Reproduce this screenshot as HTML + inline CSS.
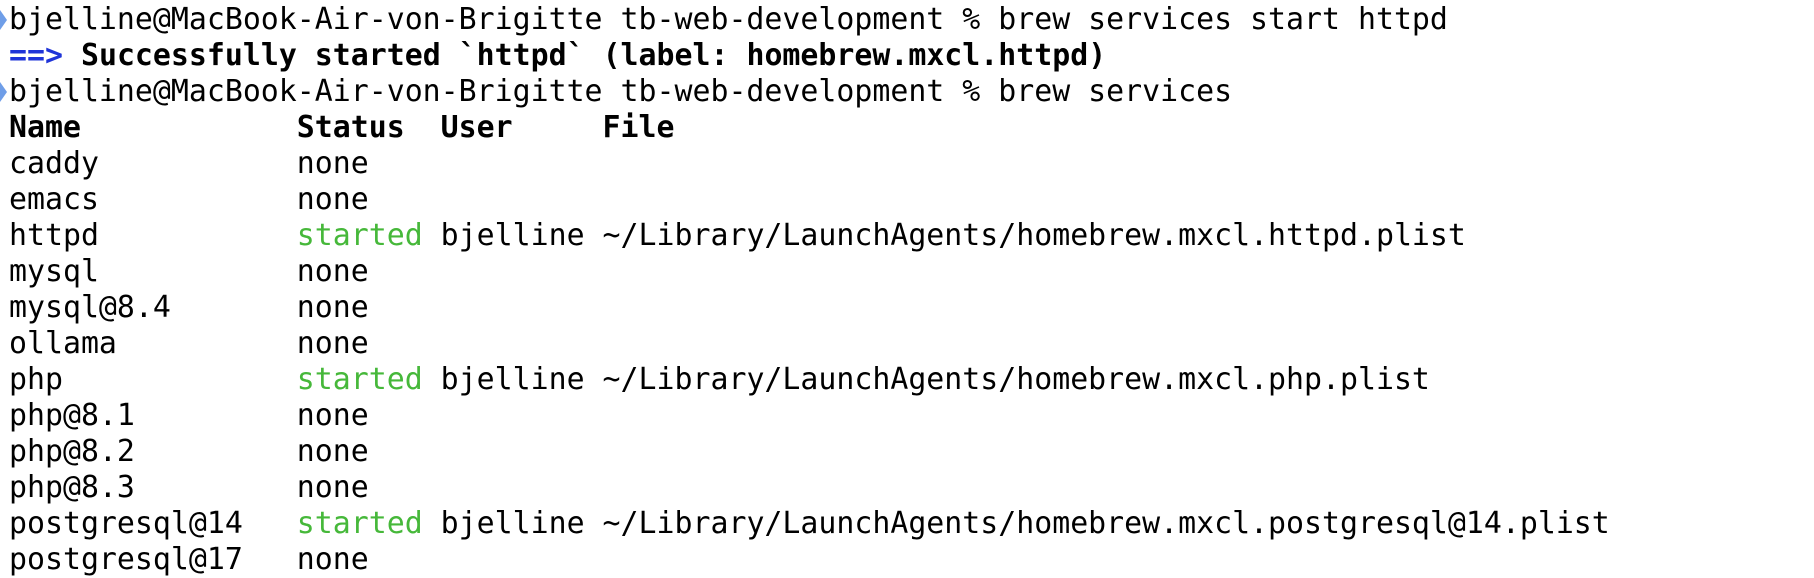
<!DOCTYPE html>
<html><head><meta charset="utf-8"><style>
html,body{margin:0;padding:0;background:#fff;width:1814px;height:554px;overflow:hidden}
pre{margin:0;position:absolute;left:9px;top:2px;font-family:"DejaVu Sans Mono","Liberation Mono",monospace;font-size:29.88px;line-height:36px;color:#000;letter-spacing:0}
b{font-weight:bold}
.bl{color:#1f34d8;font-weight:bold}
.g{color:#46b83a}
.m{position:absolute;left:0;width:7px;height:20px;background:#6f9ee8;clip-path:polygon(0 0,100% 50%,0 100%)}
</style></head><body>
<div class="m" style="top:10px"></div>
<div class="m" style="top:82px"></div>
<pre>bjelline@MacBook-Air-von-Brigitte tb-web-development % brew services start httpd
<span class="bl">==&gt;</span> <b>Successfully started `httpd` (label: homebrew.mxcl.httpd)</b>
bjelline@MacBook-Air-von-Brigitte tb-web-development % brew services
<b>Name            Status  User     File</b>
caddy           none
emacs           none
httpd           <span class="g">started</span> bjelline ~/Library/LaunchAgents/homebrew.mxcl.httpd.plist
mysql           none
mysql@8.4       none
ollama          none
php             <span class="g">started</span> bjelline ~/Library/LaunchAgents/homebrew.mxcl.php.plist
php@8.1         none
php@8.2         none
php@8.3         none
postgresql@14   <span class="g">started</span> bjelline ~/Library/LaunchAgents/homebrew.mxcl.postgresql@14.plist
postgresql@17   none</pre>
</body></html>
